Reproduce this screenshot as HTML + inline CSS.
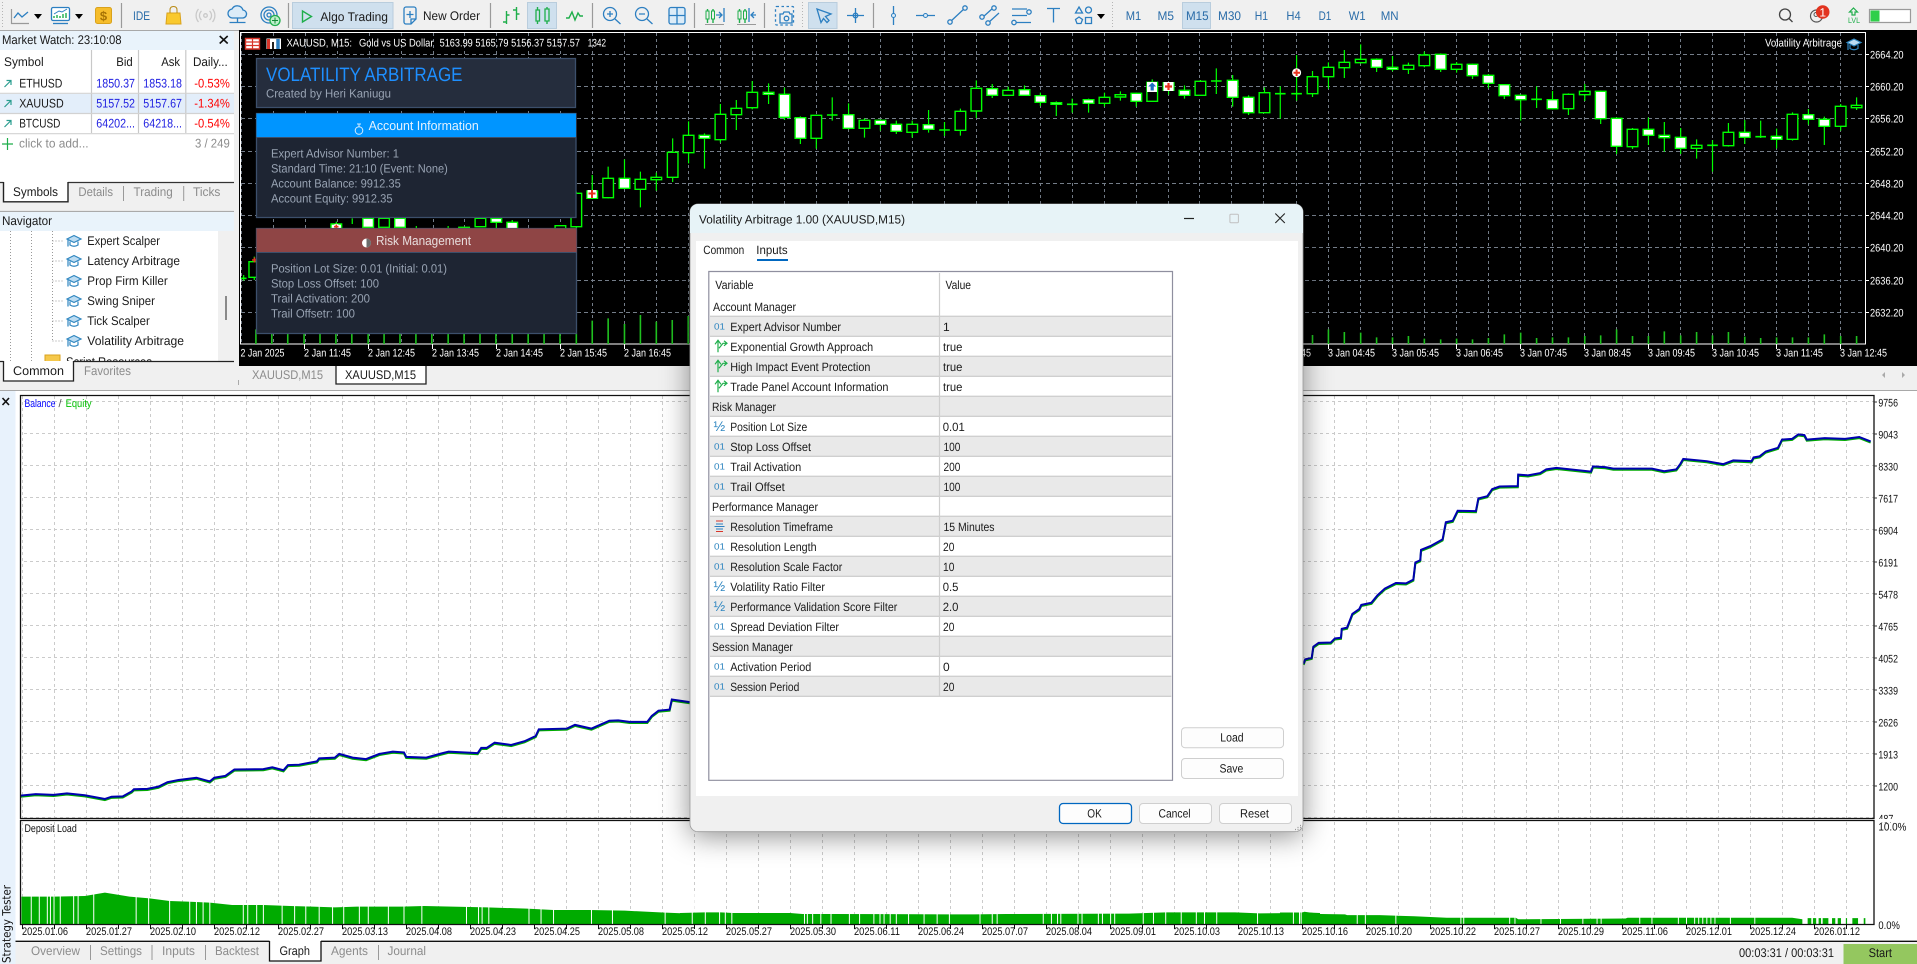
<!DOCTYPE html>
<html><head><meta charset="utf-8"><title>MetaTrader 5</title>
<style>
html,body{margin:0;padding:0;background:#f0f0f0;overflow:hidden}
svg{display:block;font-family:"Liberation Sans",sans-serif;font-size:12px;text-rendering:geometricPrecision}
path,rect,polyline,polygon,line,circle{vector-effect:non-scaling-stroke}
.ic{fill:none;stroke:#2c7fc1;stroke-width:1.3}
.gr{fill:none;stroke:#1fae4b;stroke-width:1.4}
.tb{fill:#2a6ca8;font-size:12.5px}
.mw{fill:#1a1a1a;font-size:12.5px}
.gy{fill:#8c8c8c;font-size:12.5px}
.bl{fill:#1c1ce0;font-size:12.5px}
.rd{fill:#f00;font-size:12.5px}
.wh{fill:#fff;font-size:11px}
.pn{fill:#98a3b3;font-size:12px}
.dg{fill:#1a1a1a;font-size:12px}
.o1{fill:#2f86c0;font-size:9px}
.hf{fill:#2f86c0;font-size:14px}
.ax{fill:#111;font-size:11px}
.wk{fill:none;stroke:#0f0;stroke-width:1.2}
.bw{fill:#fff;stroke:#0f0;stroke-width:1.4}
.bb{fill:#000;stroke:#0f0;stroke-width:1.4}
.dj{fill:none;stroke:#0f0;stroke-width:1.6}
.vo{fill:none;stroke:#1fc01f;stroke-width:1.6}
</style></head><body>
<svg xmlns="http://www.w3.org/2000/svg" width="1917" height="964" viewBox="0 0 1917 964">
<defs>
<pattern id="gv" patternUnits="userSpaceOnUse" x="22" y="0" width="32" height="6"><rect x="0" y="0" width="1" height="3" fill="#cbcbcb"/></pattern>
<pattern id="gh" patternUnits="userSpaceOnUse" x="0" y="401" width="6" height="32"><rect x="0" y="0" width="3" height="1" fill="#cbcbcb"/></pattern>
<pattern id="gt" patternUnits="userSpaceOnUse" x="22" y="925" width="32" height="4"><rect x="0" y="0" width="1" height="4" fill="#111"/></pattern>
<filter id="sh" filterUnits="userSpaceOnUse" x="600" y="150" width="800" height="780"><feGaussianBlur stdDeviation="14"/></filter>
<g id="cp"><path d="M1 4.500L8 1l7 3.500L8 8z" fill="#bcdcf2" stroke="#2f86c0" stroke-width="1.200"/><path d="M4 7v3.500q4 2.500 8 0V7M2 5v7" fill="none" stroke="#2f86c0" stroke-width="1.200"/></g>
<g id="ar"><path d="M4.500 3.500L11-3M6.500-3H11V1.500" fill="none" stroke="#2a9d8f" stroke-width="1.200"/></g>
<g id="bo"><path d="M4 16V5M1 8L4 4l3 4M5 12l4-5h3M10 4.500l3 2.500-3 2.500" fill="none" stroke="#1fae4b" stroke-width="1.200"/></g>
</defs>

<rect width="1917" height="964" fill="#f0f0f0"/>

<!-- toolbar -->
<path d="M2.500 2V29M802.500 2V29M1112.500 2V29" stroke="#b5b5b5" stroke-dasharray="1 2"/>
<path d="M121.500 3V28M288.500 3V28M490.500 3V28M592.500 3V28M694.500 3V28M764.500 3V28M873.500 3V28" stroke="#9a9a9a" stroke-width="1.200"/>
<path d="M11.500 9V23.500H29" fill="none" stroke="#999" stroke-width="1.200"/>
<path d="M14 18L18 13l4 4 6-5" class="ic"/>
<path d="M34 14h8l-4 5z"/>
<rect x="51.500" y="7.500" width="18" height="13" rx="1.500" fill="#fff" stroke="#2c7fc1" stroke-width="1.300"/>
<path d="M54 18v-2M57 18v-3M60 18v-2M63 18v-4M66 18v-5" class="gr"/>
<path d="M54 14l5-3 3 1 5-3" fill="none" stroke="#2c7fc1"/>
<path d="M53 23.500h15" class="ic" stroke-width="2"/>
<path d="M75 14h8l-4 5z"/>
<rect x="95.500" y="7.500" width="16" height="16" rx="2" fill="#f6bd2b" stroke="#d9a21c"/>
<text x="103.500" y="20.500" text-anchor="middle" font-size="13" font-weight="bold" fill="#a87405">$</text>
<text class="tb" x="133" y="20" font-size="13" textLength="17" lengthAdjust="spacingAndGlyphs">IDE</text>
<path d="M167 13h13l1 11h-15z" fill="#f9c92e" stroke="#d9a21c"/>
<path d="M170 13V10q0-3.500 3.500-3.500T177 10v3" fill="none" stroke="#b98a14"/>
<circle cx="205.500" cy="15.500" r="1.800" fill="none" stroke="#c9c9c9" stroke-width="1.300"/>
<path d="M201.500 11a6 6 0 0 0 0 9M209.500 11a6 6 0 0 1 0 9M198.500 9a10 10 0 0 0 0 13M212.500 9a10 10 0 0 1 0 13" fill="none" stroke="#c9c9c9" stroke-width="1.300"/>
<path d="M233 18h9a4 4 0 0 0 1-8a6 6 0 0 0-11-1a4.500 4.500 0 0 0 1 9z" fill="#dcecf8" stroke="#2c7fc1" stroke-width="1.300"/>
<path d="M237.500 18v4M229.500 22.500h16" class="ic"/>
<circle cx="269" cy="15" r="8" class="ic"/><circle cx="269" cy="15" r="5" class="ic"/><circle cx="269" cy="15" r="2" class="ic"/>
<circle cx="275" cy="20.500" r="5" fill="#bff0cc" stroke="#1fae4b" stroke-width="1.300"/>
<path d="M275 17.500v6M272 20.500h6" stroke="#138a36" fill="none"/>
<rect x="292.500" y="2.500" width="100.500" height="26" fill="#cfe0ee" stroke="#b9cddd"/>
<path d="M302.500 11v11l9-5.500z" class="gr" stroke-width="1.600"/>
<text class="mw" x="320.400" y="21" font-size="13" textLength="67.600" lengthAdjust="spacingAndGlyphs">Algo Trading</text>
<path d="M404 9a2 2 0 0 1 2-2h8a2 2 0 0 1 2 2v10l-5 5h-5a2 2 0 0 1-2-2z" class="ic"/>
<path d="M410 11v7M406.500 14.500h7M411 24v-5h5" class="ic"/>
<text class="mw" x="423" y="20" font-size="13" textLength="57" lengthAdjust="spacingAndGlyphs">New Order</text>
<path d="M506.500 11v13M503 22h3.500M506.500 15h3M516.500 7v13M513 10h3.500M516.500 14h3" class="gr"/>
<rect x="527.500" y="2.500" width="29" height="26" fill="#cfe0ee" stroke="#b9cddd"/>
<path d="M537.500 7v17M547 7v17" class="gr"/><rect x="536" y="10" width="3.500" height="11" fill="#cfe0ee" stroke="#1fae4b" stroke-width="1.300"/><rect x="545" y="9" width="4" height="12" fill="#cfe0ee" stroke="#1fae4b" stroke-width="1.300"/>
<path d="M566 18h3l3-6 3 8 3-7 2 3h3" class="gr"/>
<circle cx="610" cy="14" r="6.500" class="ic"/><path d="M615 19l5.500 5M610 11v6M607 14h6" class="ic"/>
<circle cx="642" cy="14" r="6.500" class="ic"/><path d="M647 19l5.500 5M639 14h6" class="ic"/>
<rect x="669" y="7.500" width="16" height="16.500" rx="2" fill="#dcecf8" stroke="#2c7fc1" stroke-width="1.300"/><path d="M677 8v16M669 15.500h16" class="ic"/>
<path d="M707.500 9v14M713 9v14" class="gr"/><rect x="706" y="11" width="3" height="8" fill="#f0f0f0" stroke="#1fae4b"/><rect x="711.500" y="11" width="3" height="8" fill="#f0f0f0" stroke="#1fae4b"/>
<path d="M716 15h6m-3-3l3 3l-3 3M724 8v14" class="ic"/><path d="M705 24.500h19" stroke="#999" fill="none"/>
<path d="M739.500 9v14M745 9v14" class="gr"/><rect x="738" y="11" width="3" height="8" fill="#f0f0f0" stroke="#1fae4b"/><rect x="743.500" y="11" width="3" height="8" fill="#f0f0f0" stroke="#1fae4b"/>
<path d="M749 8v14M756 15h-5m3-3l-3 3l3 3" class="ic"/><path d="M737 24.500h19" stroke="#999" fill="none"/>
<rect x="775.500" y="6.500" width="18" height="18.500" rx="1" class="ic" stroke-dasharray="2.500 2.500"/>
<path d="M780 14h3l1-2h5l1 2h2v9h-12z" fill="#f0f0f0" stroke="#2c7fc1" stroke-width="1.300"/><circle cx="786.500" cy="18.500" r="2.300" class="ic"/>
<rect x="808.500" y="2.500" width="28.500" height="26" fill="#cfe0ee" stroke="#b9cddd"/>
<path d="M817 9l14 5-5.500 2.500 3.500 4-2 2-3.500-4-2.500 4z" class="ic" stroke-width="1.400"/>
<path d="M855.500 8v15M847 15.500h17" class="ic"/><circle cx="855.500" cy="15.500" r="2.300" class="ic"/>
<path d="M893.500 6v19M916 15.500h19M950 22L965 8M983 17L993 8M988 23L999 13M1012 9h15M1012 15.500h15M1016 22.500h15" class="ic"/>
<circle cx="893.500" cy="15.500" r="2" fill="#dcecf8" stroke="#2c7fc1"/><circle cx="925.500" cy="15.500" r="2" fill="#dcecf8" stroke="#2c7fc1"/>
<circle cx="950" cy="22" r="2.200" fill="#f0f0f0" stroke="#2c7fc1" stroke-width="1.300"/><circle cx="965" cy="8" r="2.200" fill="#f0f0f0" stroke="#2c7fc1" stroke-width="1.300"/>
<circle cx="982" cy="17" r="2.200" fill="#f0f0f0" stroke="#2c7fc1" stroke-width="1.300"/><circle cx="994" cy="8" r="2.200" fill="#f0f0f0" stroke="#2c7fc1" stroke-width="1.300"/><circle cx="988" cy="23" r="2.200" fill="#f0f0f0" stroke="#2c7fc1" stroke-width="1.300"/>
<circle cx="1029" cy="12" r="2.200" fill="#f0f0f0" stroke="#2c7fc1" stroke-width="1.300"/><circle cx="1014" cy="22.500" r="2.200" fill="#f0f0f0" stroke="#2c7fc1" stroke-width="1.300"/>
<path d="M1047 8.500h13M1053.500 8.500v14" class="ic"/>
<path d="M1079 7l3.500 6h-7z" class="ic"/><circle cx="1088.500" cy="10" r="3" class="ic"/><path d="M1079 17l3.500 2.500-1.500 4h-4l-1.500-4z" class="ic"/><rect x="1085.500" y="17.500" width="6" height="6" class="ic"/>
<path d="M1097 14h8l-4 5z"/>
<text class="tb" x="1125.700" y="20" textLength="15.500" lengthAdjust="spacingAndGlyphs">M1</text>
<text class="tb" x="1157.500" y="20" textLength="16.500" lengthAdjust="spacingAndGlyphs">M5</text>
<rect x="1182.500" y="2.500" width="28" height="26" fill="#cfe0ee" stroke="#b9cddd"/>
<text class="tb" x="1186" y="20" textLength="22.600" lengthAdjust="spacingAndGlyphs">M15</text>
<text class="tb" x="1218" y="20" textLength="23" lengthAdjust="spacingAndGlyphs">M30</text>
<text class="tb" x="1254.700" y="20" textLength="13.300" lengthAdjust="spacingAndGlyphs">H1</text>
<text class="tb" x="1286.400" y="20" textLength="14.300" lengthAdjust="spacingAndGlyphs">H4</text>
<text class="tb" x="1318.600" y="20" textLength="12.700" lengthAdjust="spacingAndGlyphs">D1</text>
<text class="tb" x="1348.800" y="20" textLength="16.800" lengthAdjust="spacingAndGlyphs">W1</text>
<text class="tb" x="1380.700" y="20" textLength="17.900" lengthAdjust="spacingAndGlyphs">MN</text>
<circle cx="1785" cy="14.500" r="5.500" fill="none" stroke="#444" stroke-width="1.300"/><path d="M1789 18.500l3.500 3.500" stroke="#444" stroke-width="1.300"/>
<circle cx="1816.500" cy="16" r="6" fill="none" stroke="#555" stroke-width="1.200"/><circle cx="1816" cy="14.500" r="2" fill="none" stroke="#555"/>
<circle cx="1822.700" cy="12" r="6.800" fill="#e2331f"/>
<text x="1822.700" y="16.500" text-anchor="middle" fill="#fff" font-size="12">1</text>
<path d="M1853.500 8l4 4h-2.500v3h-3v-3h-2.500z" fill="none" stroke="#1fae4b" stroke-width="1.200"/>
<text x="1848" y="23" fill="#1fae4b" font-size="8" textLength="12" lengthAdjust="spacingAndGlyphs">LVL</text>
<rect x="1869.500" y="9.500" width="41" height="13" fill="#fff" stroke="#9a9a9a" stroke-width="1.200"/>
<rect x="1870.500" y="10.500" width="9" height="11" fill="#2fcf4a"/>

<!-- chart -->
<rect x="239" y="30" width="1678" height="336" fill="#000"/>
<rect x="0" y="30" width="239" height="1" fill="#a8a8a8"/>
<rect x="240.500" y="32.500" width="1625" height="311.500" fill="none" stroke="#fff"/>
<g transform="translate(.5,0)" stroke="#747d89" fill="none" stroke-dasharray="3 3">
<path d="M241 33V344M273 33V344M305 33V344M337 33V344M369 33V344M401 33V344M433 33V344M464 33V344M496 33V344M528 33V344M560 33V344M592 33V344M624 33V344M656 33V344M688 33V344M720 33V204M752 33V204M784 33V204M816 33V204M848 33V204M880 33V204M912 33V204M944 33V204M976 33V204M1008 33V204M1040 33V204M1072 33V204M1104 33V204M1136 33V204M1168 33V204M1199 33V204M1231 33V204M1263 33V204M1296 33V344M1328 33V344M1360 33V344M1392 33V344M1424 33V344M1456 33V344M1488 33V344M1520 33V344M1552 33V344M1584 33V344M1616 33V344M1648 33V344M1680 33V344M1712 33V344M1744 33V344M1776 33V344M1808 33V344M1840 33V344"/>
</g>
<path d="M241 54.500H1865M241 86.500H1865M241 118.500H1865M241 151.500H1865M241 183.500H1865M241 215.500H1865M241 247.500H1865M241 280.500H1865M241 312.500H1865" stroke="#747d89" fill="none" stroke-dasharray="4 3"/>
<path d="M1866 54.500h3M1866 86.500h3M1866 118.500h3M1866 151.500h3M1866 183.500h3M1866 215.500h3M1866 247.500h3M1866 280.500h3M1866 312.500h3" stroke="#fff"/>

<!-- candles z1 -->
<g transform="scale(.40816,.33333)">
<path class="vo" d="M627 988V1032M666 1000V1032M705 1000V1032M745 1000V1032M784 1000V1032M823 1000V1032M862 1000V1032M902 1000V1032M941 1000V1032M980 1000V1032M1019 1000V1032M1058 1000V1032M1098 1000V1032M1137 1000V1032M1176 1000V1032M1215 1000V1032M1255 1000V1032M1294 1000V1032M1333 1000V1032M1372 1000V1032M1412 1000V1032M1451 962V1032M1490 955V1032M1530 972V1032M1569 945V1032"/>
<path class="wk" d="M1412 575V690M1451 525V597M1490 500V595M1530 478V567M863 655V672M824 665V692M1020 678V690M1098 678V690M1216 655V685M1255 660V690M597 825V842M623 770V840"/>
<path class="bb" d="M1399 580h26V680h-26zM1477 535h26V593h-26zM928 655h26V682h-26zM1124 682h26V690h-26zM1164 655h26V680h-26zM1360 677h26V690h-26zM610 785h26V832h-26z"/>
<path class="bw" d="M1438 573h26V595h-26zM1517 535h26V565h-26zM811 672h26V690h-26zM889 655h26V682h-26zM967 655h26V682h-26zM1203 655h26V667h-26zM1242 667h26V690h-26z"/>
<path class="dj" d="M590 835h14"/>
</g>
<!-- candles z2 -->
<g transform="translate(640,0) scale(.40816,.33333)">
<path class="vo" d="M40 965V1032M79 960V1032M118 948V1032"/>
<path class="wk" d="M1 515V622M40 518V572M80 415V546M119 364V490M158 400V506M197 312V428M236 300V390M275 243V328M315 250V312M354 263V360M393 349V432M432 344V446M471 292V362M511 310V388M550 355V413M589 358V392M628 362V402M667 362V413M707 330V398M746 366V408M785 326V407M824 241V354M863 252V294M902 260V287M942 256V288M981 278V318M1020 304V348M1059 296V338M1099 296V338M1138 278V320M1177 274V302M1216 278V320M1255 238V305M1295 246V284M1334 256V296M1373 240V288M1412 205V282M1452 225V320M1491 286V345M1530 262V338"/>
<path class="bw" d="M145 406h26V415h-26zM302 277h26V283h-26zM341 283h26V352h-26zM380 353h26V415h-26zM498 344h26V385h-26zM576 361h26V373h-26zM615 373h26V394h-26zM694 374h26V388h-26zM850 266h26V286h-26zM929 269h26V286h-26zM968 287h26V307h-26zM1007 308h26V313h-26zM1086 299h26V310h-26zM1203 280h26V304h-26zM1282 248h26V271h-26zM1321 271h26V286h-26zM1439 241h26V292h-26zM1478 292h26V338h-26z"/>
<path class="bb" d="M-12 538h26V568h-26zM27 532h26V539h-26zM67 457h26V532h-26zM106 406h26V458h-26zM184 343h26V419h-26zM223 325h26V344h-26zM262 277h26V323h-26zM419 346h26V415h-26zM537 361h26V385h-26zM654 373h26V397h-26zM772 334h26V391h-26zM811 265h26V333h-26zM889 271h26V286h-26zM1125 292h26V310h-26zM1164 284h26V291h-26zM1242 247h26V304h-26zM1360 244h26V286h-26zM1517 278h26V338h-26z"/>
<path class="dj" d="M458 345h26M733 390h26M1046 313h26M1399 243h26"/>
</g>
<!-- candles z3 -->
<g transform="translate(1277,0) scale(.40816,.33333)">
<path class="vo" d="M87 1005V1032M126 988V1032M165 996V1032M205 998V1032M244 1012V1032M283 1012V1032M322 1008V1032M361 1016V1032M401 1018V1032M440 1016V1032M479 1018V1032M518 1014V1032M557 1003V1032M597 998V1032M636 1014V1032M675 1012V1032M714 1012V1032M754 1008V1032M793 1006V1032M832 988V1032M871 1008V1032M910 1008V1032M949 994V1032M989 1006V1032M1028 996V1032M1067 1006V1032M1106 996V1032M1146 1010V1032M1185 1014V1032M1224 1012V1032M1263 1012V1032M1302 1012V1032M1341 1003V1032M1381 1008V1032M1420 1008V1032"/>
<path class="wk" d="M8 259V356M48 165V302M87 213V291M126 187V266M165 150V234M205 133V190M244 175V216M283 168V214M322 188V222M361 155V202M401 160V216M440 186V218M479 191V237M518 222V265M557 252V297M597 284V362M636 259V324M675 273V328M714 280V345M754 252V303M793 272V372M832 352V462M871 384V447M910 353V435M949 366V455M989 384V462M1028 418V476M1067 420V515M1106 369V440M1146 360V432M1185 362V414M1224 386V445M1263 337V422M1302 327V374M1341 350V435M1381 312V392M1420 292V330"/>
<path class="bw" d="M231 178h26V202h-26zM270 202h26V208h-26zM388 163h26V208h-26zM466 193h26V227h-26zM505 226h26V250h-26zM544 254h26V287h-26zM584 286h26V299h-26zM662 299h26V326h-26zM780 274h26V356h-26zM819 355h26V439h-26zM897 388h26V406h-26zM936 406h26V413h-26zM976 412h26V445h-26zM1133 397h26V412h-26zM1211 409h26V418h-26zM1289 344h26V358h-26zM1328 358h26V379h-26z"/>
<path class="bb" d="M74 230h26V281h-26zM113 202h26V230h-26zM152 187h26V203h-26zM192 178h26V188h-26zM309 196h26V208h-26zM348 165h26V197h-26zM427 193h26V208h-26zM701 283h26V326h-26zM741 274h26V284h-26zM858 388h26V440h-26zM1015 436h26V445h-26zM1093 397h26V437h-26zM1250 343h26V418h-26zM1368 319h26V379h-26zM1407 316h26V323h-26z"/>
<path class="dj" d="M-5 281h26M35 281h26M623 298h26M1054 436h26M1172 410h26"/>
</g>
<!-- markers -->
<rect x="1147" y="82" width="10" height="10" fill="#fff"/><path d="M1152.200 82.500l4 4h-2.400v4h-3.200v-4h-2.400z" fill="#1f6fc0"/>
<rect x="1163.500" y="82" width="10" height="9" fill="#fff"/><path d="M1168.500 83v7M1165 86.500h7" stroke="#e8321e" stroke-width="2.200"/>
<circle cx="1296.600" cy="72.700" r="4.500" fill="#fff"/><path d="M1296.600 69.500v6.500M1293.500 72.700h6.500" stroke="#e8321e" stroke-width="2"/>
<rect x="587.500" y="190" width="9" height="8" fill="#fff"/><path d="M592 190v8M588.500 193.500h7" stroke="#e8321e" stroke-width="2"/>
<circle cx="336.300" cy="226.700" r="3" fill="#fff"/><path d="M336.300 224.500v4.500M334 226.700h4.500" stroke="#e8321e" stroke-width="1.600"/>
<path d="M254.500 257.500v5M252 260h5" stroke="#e8321e" stroke-width="1.600"/>

<!-- chart text -->
<rect x="245.500" y="38.500" width="14" height="10.500" fill="#fff" stroke="#d8352a" stroke-width="1.400"/>
<path d="M252.500 39v10M246 42h13M246 45.500h13" stroke="#d8352a" stroke-width="1.200"/>
<rect x="266.500" y="38.500" width="14.500" height="10.500" fill="#fff"/>
<path d="M268.500 39v10" stroke="#d8352a" stroke-width="3"/><path d="M273 42v7" stroke="#222" stroke-width="2"/><path d="M278 39v10" stroke="#2c7fc1" stroke-width="3.500"/>
<text class="wh" x="286.500" y="46.700" textLength="65.500" lengthAdjust="spacingAndGlyphs">XAUUSD, M15:</text>
<text class="wh" x="359" y="46.700" textLength="74.500" lengthAdjust="spacingAndGlyphs">Gold vs US Dollar</text>
<text class="wh" x="439.600" y="46.700" textLength="140.400" lengthAdjust="spacingAndGlyphs">5163.99 5165.79 5156.37 5157.57</text>
<text class="wh" x="587.800" y="46.700" textLength="18.200" lengthAdjust="spacingAndGlyphs">1342</text>
<text class="wh" x="1765" y="46.700" textLength="77" lengthAdjust="spacingAndGlyphs">Volatility Arbitrage</text>
<use href="#cp" x="1846" y="38"/>
<text class="wh" x="1870" y="58.500" textLength="33.500" lengthAdjust="spacingAndGlyphs">2664.20</text>
<text class="wh" x="1870" y="90.500" textLength="33.500" lengthAdjust="spacingAndGlyphs">2660.20</text>
<text class="wh" x="1870" y="122.500" textLength="33.500" lengthAdjust="spacingAndGlyphs">2656.20</text>
<text class="wh" x="1870" y="155.500" textLength="33.500" lengthAdjust="spacingAndGlyphs">2652.20</text>
<text class="wh" x="1870" y="187.500" textLength="33.500" lengthAdjust="spacingAndGlyphs">2648.20</text>
<text class="wh" x="1870" y="219.500" textLength="33.500" lengthAdjust="spacingAndGlyphs">2644.20</text>
<text class="wh" x="1870" y="251.500" textLength="33.500" lengthAdjust="spacingAndGlyphs">2640.20</text>
<text class="wh" x="1870" y="284.500" textLength="33.500" lengthAdjust="spacingAndGlyphs">2636.20</text>
<text class="wh" x="1870" y="316.500" textLength="33.500" lengthAdjust="spacingAndGlyphs">2632.20</text>
<text class="wh" x="240.500" y="356.700" textLength="44" lengthAdjust="spacingAndGlyphs">2 Jan 2025</text>
<text class="wh" x="304" y="356.700" textLength="47" lengthAdjust="spacingAndGlyphs">2 Jan 11:45</text>
<text class="wh" x="368" y="356.700" textLength="47" lengthAdjust="spacingAndGlyphs">2 Jan 12:45</text>
<text class="wh" x="432" y="356.700" textLength="47" lengthAdjust="spacingAndGlyphs">2 Jan 13:45</text>
<text class="wh" x="496" y="356.700" textLength="47" lengthAdjust="spacingAndGlyphs">2 Jan 14:45</text>
<text class="wh" x="560" y="356.700" textLength="47" lengthAdjust="spacingAndGlyphs">2 Jan 15:45</text>
<text class="wh" x="624" y="356.700" textLength="47" lengthAdjust="spacingAndGlyphs">2 Jan 16:45</text>
<text class="wh" x="1264" y="356.700" textLength="47" lengthAdjust="spacingAndGlyphs">3 Jan 03:45</text>
<text class="wh" x="1328" y="356.700" textLength="47" lengthAdjust="spacingAndGlyphs">3 Jan 04:45</text>
<text class="wh" x="1392" y="356.700" textLength="47" lengthAdjust="spacingAndGlyphs">3 Jan 05:45</text>
<text class="wh" x="1456" y="356.700" textLength="47" lengthAdjust="spacingAndGlyphs">3 Jan 06:45</text>
<text class="wh" x="1520" y="356.700" textLength="47" lengthAdjust="spacingAndGlyphs">3 Jan 07:45</text>
<text class="wh" x="1584" y="356.700" textLength="47" lengthAdjust="spacingAndGlyphs">3 Jan 08:45</text>
<text class="wh" x="1648" y="356.700" textLength="47" lengthAdjust="spacingAndGlyphs">3 Jan 09:45</text>
<text class="wh" x="1712" y="356.700" textLength="47" lengthAdjust="spacingAndGlyphs">3 Jan 10:45</text>
<text class="wh" x="1776" y="356.700" textLength="47" lengthAdjust="spacingAndGlyphs">3 Jan 11:45</text>
<text class="wh" x="1840" y="356.700" textLength="47" lengthAdjust="spacingAndGlyphs">3 Jan 12:45</text>
<path d="M304.500 344v5M368.500 344v5M432.500 344v5M496.500 344v5M560.500 344v5M624.500 344v5M1328.500 344v5M1392.500 344v5M1456.500 344v5M1520.500 344v5M1584.500 344v5M1648.500 344v5M1712.500 344v5M1776.500 344v5M1840.500 344v5" stroke="#fff"/>

<!-- EA panels -->
<rect x="256.500" y="58.500" width="319" height="49" fill="#252d3d" stroke="#3c4f6b" stroke-width="1.300"/>
<text x="266" y="81" font-size="19.500" fill="#1e8fff" textLength="196.500" lengthAdjust="spacingAndGlyphs">VOLATILITY ARBITRAGE</text>
<text class="pn" x="266" y="97.700" font-size="13" textLength="125" lengthAdjust="spacingAndGlyphs">Created by Heri Kaniugu</text>
<rect x="256.500" y="113.500" width="319.500" height="104" fill="#1e2533" stroke="#3c4f6b" stroke-width="1.300"/>
<rect x="256.500" y="113.500" width="319.500" height="24" fill="#0095ff"/>
<path d="M256.500 137.500H576" stroke="#3c4f6b"/>
<circle cx="359" cy="130.500" r="3.800" fill="none" stroke="#d5ecff"/><path d="M359 124v2.700M357 124h4" stroke="#d5ecff"/>
<text x="368.600" y="130" font-size="13" fill="#e4f2ff" textLength="110.200" lengthAdjust="spacingAndGlyphs">Account Information</text>
<text class="pn" x="271" y="157.700" textLength="128" lengthAdjust="spacingAndGlyphs">Expert Advisor Number: 1</text>
<text class="pn" x="271" y="172.700" textLength="176.800" lengthAdjust="spacingAndGlyphs">Standard Time: 21:10 (Event: None)</text>
<text class="pn" x="271" y="187.700" textLength="129.800" lengthAdjust="spacingAndGlyphs">Account Balance: 9912.35</text>
<text class="pn" x="271" y="202.700" textLength="121.600" lengthAdjust="spacingAndGlyphs">Account Equity: 9912.35</text>
<rect x="256.500" y="228.500" width="320" height="105" fill="#1e2533" stroke="#3c4f6b" stroke-width="1.300"/>
<rect x="256.500" y="228.500" width="320" height="24" fill="#8f4545"/>
<path d="M256.500 252.500H576" stroke="#3c4f6b"/>
<circle cx="366.500" cy="243" r="4.500" fill="#fff"/><path d="M366.500 238.500a4.500 4.500 0 0 1 0 9z" fill="#6b6b6b"/>
<text x="376" y="245" font-size="13" fill="#e8dede" textLength="95" lengthAdjust="spacingAndGlyphs">Risk Management</text>
<text class="pn" x="271" y="272.700" textLength="176" lengthAdjust="spacingAndGlyphs">Position Lot Size: 0.01 (Initial: 0.01)</text>
<text class="pn" x="271" y="287.700" textLength="108" lengthAdjust="spacingAndGlyphs">Stop Loss Offset: 100</text>
<text class="pn" x="271" y="302.700" textLength="99" lengthAdjust="spacingAndGlyphs">Trail Activation: 200</text>
<text class="pn" x="271" y="317.700" textLength="84" lengthAdjust="spacingAndGlyphs">Trail Offsetr: 100</text>

<!-- market watch -->
<rect x="0" y="31" width="234" height="19" fill="#e9f3fb"/>
<rect x="0" y="50" width="234" height="132" fill="#fff"/>
<rect x="0" y="94" width="234" height="19.500" fill="#e3eefa"/>
<text class="mw" x="2" y="44" textLength="119.600" lengthAdjust="spacingAndGlyphs">Market Watch: 23:10:08</text>
<path d="M219.700 36l8 7.500M227.700 36l-8 7.500M219.700 216.700l8 7.500M227.700 216.700l-8 7.500" stroke="#111" stroke-width="1.600"/>
<text class="mw" x="4" y="66" textLength="39.700" lengthAdjust="spacingAndGlyphs">Symbol</text>
<text class="mw" x="116.300" y="66" textLength="16.400" lengthAdjust="spacingAndGlyphs">Bid</text>
<text class="mw" x="161.200" y="66" textLength="18.800" lengthAdjust="spacingAndGlyphs">Ask</text>
<text class="mw" x="193" y="66" textLength="34.800" lengthAdjust="spacingAndGlyphs">Daily...</text>
<path d="M91.500 50V133M138.500 50V133M185.800 50V133" stroke="#c8c8c8" stroke-width="1.200"/>
<path d="M0 93.300H234M0 113.500H234M0 133.700H234" stroke="#d2d2d2" stroke-width="1.200"/>
<use href="#ar" x="0" y="83.500"/><use href="#ar" x="0" y="103.500"/><use href="#ar" x="0" y="123.500"/>
<text class="mw" x="19.200" y="87.700" textLength="43.200" lengthAdjust="spacingAndGlyphs">ETHUSD</text>
<text class="mw" x="19.200" y="107.700" textLength="44.500" lengthAdjust="spacingAndGlyphs">XAUUSD</text>
<text class="mw" x="19.200" y="127.700" textLength="41.200" lengthAdjust="spacingAndGlyphs">BTCUSD</text>
<text class="bl" x="96.300" y="87.700" textLength="38.700" lengthAdjust="spacingAndGlyphs">1850.37</text>
<text class="bl" x="143.300" y="87.700" textLength="38.700" lengthAdjust="spacingAndGlyphs">1853.18</text>
<text class="rd" x="194.300" y="87.700" textLength="35.500" lengthAdjust="spacingAndGlyphs">-0.53%</text>
<text class="bl" x="96.300" y="107.700" textLength="38.700" lengthAdjust="spacingAndGlyphs">5157.52</text>
<text class="bl" x="143.300" y="107.700" textLength="38.700" lengthAdjust="spacingAndGlyphs">5157.67</text>
<text class="rd" x="194.300" y="107.700" textLength="35.500" lengthAdjust="spacingAndGlyphs">-1.34%</text>
<text class="bl" x="96.300" y="127.700" textLength="38.700" lengthAdjust="spacingAndGlyphs">64202...</text>
<text class="bl" x="143.300" y="127.700" textLength="38.700" lengthAdjust="spacingAndGlyphs">64218...</text>
<text class="rd" x="194.300" y="127.700" textLength="35.500" lengthAdjust="spacingAndGlyphs">-0.54%</text>
<path d="M7.500 138v12M2 144h11" stroke="#1fae4b" stroke-width="1.200"/>
<text class="gy" x="19" y="147.700" textLength="69.600" lengthAdjust="spacingAndGlyphs">click to add...</text>
<text class="gy" x="195" y="147.700" textLength="34.800" lengthAdjust="spacingAndGlyphs">3 / 249</text>
<rect x="3.500" y="182" width="64.500" height="20" fill="#fff"/>
<path d="M0 182.500H3.500M68 182.500H234" stroke="#333" stroke-width="1.200"/>
<path d="M3.500 182v19.800H68V182" fill="none" stroke="#222" stroke-width="1.400"/>
<text class="mw" x="13" y="196" textLength="45" lengthAdjust="spacingAndGlyphs">Symbols</text>
<text class="gy" x="78.400" y="196" textLength="34.600" lengthAdjust="spacingAndGlyphs">Details</text>
<text class="gy" x="133.500" y="196" textLength="39.200" lengthAdjust="spacingAndGlyphs">Trading</text>
<text class="gy" x="193" y="196" textLength="27.400" lengthAdjust="spacingAndGlyphs">Ticks</text>
<path d="M123.500 186v15M183.700 186v15" stroke="#999"/>
<path d="M0 211.500H234" stroke="#aaa" stroke-width="1.200"/>

<!-- navigator -->
<rect x="0" y="212" width="234" height="19" fill="#e9f3fb"/>
<text class="mw" x="2" y="225" textLength="50" lengthAdjust="spacingAndGlyphs">Navigator</text>
<rect x="0" y="231" width="218" height="130" fill="#fff"/>
<path d="M10.500 231V361M31.500 231V361M52.500 231V341M52.500 241H63M52.500 261H63M52.500 281H63M52.500 301H63M52.500 321H63M52.500 341H63" stroke="#999" fill="none" stroke-dasharray="1 2"/>
<use href="#cp" x="66" y="234.500"/><use href="#cp" x="66" y="254.500"/><use href="#cp" x="66" y="274.500"/><use href="#cp" x="66" y="294.500"/><use href="#cp" x="66" y="314.500"/><use href="#cp" x="66" y="334.500"/>
<text class="mw" x="87.300" y="245" textLength="72.700" lengthAdjust="spacingAndGlyphs">Expert Scalper</text>
<text class="mw" x="87.300" y="265" textLength="92.700" lengthAdjust="spacingAndGlyphs">Latency Arbitrage</text>
<text class="mw" x="87.300" y="285" textLength="80.500" lengthAdjust="spacingAndGlyphs">Prop Firm Killer</text>
<text class="mw" x="87.300" y="305" textLength="67.700" lengthAdjust="spacingAndGlyphs">Swing Sniper</text>
<text class="mw" x="87.300" y="325" textLength="62.500" lengthAdjust="spacingAndGlyphs">Tick Scalper</text>
<text class="mw" x="87.300" y="345" textLength="96.700" lengthAdjust="spacingAndGlyphs">Volatility Arbitrage</text>
<rect x="45" y="355" width="15" height="8" fill="#f5c84b" stroke="#d9a21c"/>
<text class="mw" x="66" y="366" textLength="86" lengthAdjust="spacingAndGlyphs">Script Resources</text>
<rect x="225" y="296" width="2" height="24" fill="#8a8a8a"/>
<rect x="0" y="361" width="239" height="30" fill="#f0f0f0"/>
<rect x="3.500" y="361" width="70" height="20" fill="#fff"/>
<path d="M0 361.500H3.500M73.500 361.500H234" stroke="#222" stroke-width="1.300"/>
<path d="M3.500 361V381H73.500V361" fill="none" stroke="#222" stroke-width="1.300"/>
<text class="mw" x="13" y="375" textLength="51" lengthAdjust="spacingAndGlyphs">Common</text>
<text class="gy" x="84" y="375" textLength="47" lengthAdjust="spacingAndGlyphs">Favorites</text>

<!-- chart tabs -->
<rect x="239" y="366" width="1678" height="24.500" fill="#f0f0f0"/>
<text class="gy" x="252" y="379" font-size="12.500" textLength="71" lengthAdjust="spacingAndGlyphs">XAUUSD,M15</text>
<rect x="336" y="366" width="90" height="18" fill="#fff"/>
<path d="M336 366V384H426V366" fill="none" stroke="#222" stroke-width="1.300"/>
<text class="mw" x="345" y="379" textLength="71" lengthAdjust="spacingAndGlyphs">XAUUSD,M15</text>
<path d="M238.500 380v5" stroke="#aaa"/>
<path d="M1885 372v6l-3-3zM1902 372v6l3-3z" fill="#aaa"/>
<rect x="0" y="390" width="1917" height="1.300" fill="#a8a8a8"/>

<!-- tester -->
<rect x="0" y="391" width="1917" height="573" fill="#fff"/>
<rect x="0" y="391" width="15.500" height="573" fill="#e8f2fc"/>
<path d="M2.500 398l6.500 7M9 398l-6.500 7" stroke="#111" stroke-width="1.600"/>
<text x="0" y="0" transform="translate(10.500,963) rotate(-90)" font-family="'DejaVu Sans',sans-serif" font-size="11.500" fill="#111" textLength="78" lengthAdjust="spacingAndGlyphs">Strategy Tester</text>
<rect x="21" y="396" width="1853" height="422" fill="url(#gv)"/>
<rect x="21" y="396" width="1853" height="422" fill="url(#gh)"/>
<rect x="21" y="821" width="1853" height="103" fill="url(#gv)"/>
<!-- equity curve -->
<g transform="translate(0,380) scale(.4464,.3724)">
<polyline transform="translate(0,3)" fill="none" stroke="#00aa00" stroke-width="2" points="46,1116 80,1112 120,1114 150,1110 190,1115 235,1125 250,1119 275,1118 295,1105 300,1099 330,1098 355,1092 375,1080 400,1074 440,1068 470,1078 480,1068 505,1063 525,1046 590,1045 610,1040 635,1048 645,1034 670,1033 710,1024 715,1016 750,1014 760,1004 790,1014 820,1018 850,1004 880,998 905,1000 910,1012 955,1014 985,1004 1005,998 1070,1002 1078,988 1090,988 1108,974 1145,980 1175,970 1200,956 1207,938 1270,936 1288,926 1325,936 1365,915 1385,914 1410,918 1450,918 1460,902 1475,888 1500,885 1505,858 1545,865"/>
<polyline fill="none" stroke="#0000b0" stroke-width="2" points="46,1116 80,1112 120,1114 150,1110 190,1115 235,1125 250,1119 275,1118 295,1105 300,1099 330,1098 355,1092 375,1080 400,1074 440,1068 470,1078 480,1068 505,1063 525,1046 590,1045 610,1040 635,1048 645,1034 670,1033 710,1024 715,1016 750,1014 760,1004 790,1014 820,1018 850,1004 880,998 905,1000 910,1012 955,1014 985,1004 1005,998 1070,1002 1078,988 1090,988 1108,974 1145,980 1175,970 1200,956 1207,938 1270,936 1288,926 1325,936 1365,915 1385,914 1410,918 1450,918 1460,902 1475,888 1500,885 1505,858 1545,865"/>
</g>
<g transform="translate(1280,380) scale(.4065,.3724)">
<polyline transform="translate(0,3)" fill="none" stroke="#00aa00" stroke-width="2" points="58,762 62,750 78,746 82,716 95,706 125,705 135,694 150,692 152,668 165,665 178,628 195,615 200,604 225,598 240,578 258,560 285,545 310,546 328,536 333,490 345,484 347,456 370,446 400,428 408,382 425,378 437,351 482,352 488,318 510,312 522,293 540,286 585,285 586,254 610,256 640,250 655,240 680,236 765,246 770,232 800,234 820,238 860,238 915,238 945,245 975,240 985,225 992,212 1050,218 1090,226 1115,216 1160,218 1165,208 1180,205 1195,192 1225,182 1235,160 1260,158 1275,146 1290,148 1296,160 1340,156 1390,158 1425,153 1453,165"/>
<polyline fill="none" stroke="#0000b0" stroke-width="2" points="58,762 62,750 78,746 82,716 95,706 125,705 135,694 150,692 152,668 165,665 178,628 195,615 200,604 225,598 240,578 258,560 285,545 310,546 328,536 333,490 345,484 347,456 370,446 400,428 408,382 425,378 437,351 482,352 488,318 510,312 522,293 540,286 585,285 586,254 610,256 640,250 655,240 680,236 765,246 770,232 800,234 820,238 860,238 915,238 945,245 975,240 985,225 992,212 1050,218 1090,226 1115,216 1160,218 1165,208 1180,205 1195,192 1225,182 1235,160 1260,158 1275,146 1290,148 1296,160 1340,156 1390,158 1425,153 1453,165"/>
</g>
<!-- deposit load bars -->
<g transform="translate(0,820) scale(.4464,.33333)">
<polygon fill="#00ab00" points="48,313 48,230 120,230 190,228 235,218 290,230 335,235 380,243 420,245 470,248 520,255 590,255 650,258 700,260 750,262 800,260 900,260 950,258 1090,262 1180,266 1240,270 1320,270 1400,272 1490,278 1568,282 1568,313"/>
<path fill="none" stroke="#fff" stroke-width="1" d="M70 215V313M88 215V313M106 215V313M113 215V313M121 215V313M135 215V313M165 215V313M175 215V313M210 215V313M305 215V313M333 215V313M380 215V313M425 215V313M440 215V313M455 215V313M470 215V313M545 215V313M555 215V313M575 215V313M590 215V313M632 215V313M660 215V313M685 215V313M715 215V313M745 215V313M770 215V313M805 215V313M825 215V313M870 215V313M905 215V313M945 215V313M1045 215V313M1072 215V313M1080 215V313M1095 215V313M1185 215V313M1212 215V313M1240 215V313M1325 215V313M1372 215V313M1490 215V313M1555 215V313"/>
</g>
<g transform="translate(680,825) scale(.40816,.33333)">
<polygon fill="#00ab00" points="0,297 0,264 60,262 100,262 130,264 270,264 300,267 370,267 660,268 720,268 800,267 1100,266 1190,262 1360,262 1420,265 1520,264 1530,262 1568,264 1568,297"/>
<path fill="none" stroke="#fff" stroke-width="1" d="M30 255V297M62 255V297M97 255V297M111 255V297M127 255V297M305 255V297M312 255V297M325 255V297M345 255V297M370 255V297M415 255V297M440 255V297M475 255V297M490 255V297M500 255V297M515 255V297M530 255V297M560 255V297M598 255V297M630 255V297M660 255V297M735 255V297M765 255V297M777 255V297M890 255V297M910 255V297M925 255V297M933 255V297M975 255V297M985 255V297M1025 255V297M1035 255V297M1055 255V297M1065 255V297M1135 255V297M1160 255V297M1190 255V297M1228 255V297M1265 255V297M1285 255V297M1315 255V297M1415 255V297M1505 255V297M1515 255V297"/>
</g>
<g transform="translate(1280,380) scale(.4065,.3724)">
<polygon fill="#00ab00" points="0,1462 0,1430 55,1430 60,1428 100,1434 160,1435 165,1437 245,1437 330,1440 410,1444 580,1444 586,1448 850,1446 855,1444 1260,1444 1285,1448 1285,1462"/>
<path fill="#00ab00" d="M1298 1445h9v17h-9zM1311 1445h8v17h-8zM1325 1445h6v17h-6zM1335 1445h14v17h-14zM1358 1445h8v17h-8zM1372 1445h8v17h-8zM1392 1445h3v17h-3zM1408 1445h14v17h-14zM1436 1445h4v17h-4z"/>
<path fill="none" stroke="#fff" stroke-width="1" d="M33 1420V1462M48 1420V1462M52 1420V1462M190 1420V1462M210 1420V1462M285 1420V1462M445 1420V1462M452 1420V1462M565 1420V1462M578 1420V1462M642 1420V1462M690 1420V1462M745 1420V1462M780 1420V1462M790 1420V1462M885 1420V1462M915 1420V1462M980 1420V1462M1000 1420V1462M1020 1420V1462M1030 1420V1462M1040 1420V1462M1050 1420V1462M1060 1420V1462M1070 1420V1462M1108 1420V1462M1168 1420V1462"/>
</g>
<!-- tester frame -->
<path d="M20.500 395.500H1874V818.500H20.500zM20.500 820.500H1874V924.500H20.500z" fill="none" stroke="#111" stroke-width="1.300"/>
<rect x="22" y="925" width="1853" height="4" fill="url(#gt)"/>
<path d="M1874 402h3M1874 434h3M1874 466h3M1874 498h3M1874 530h3M1874 562h3M1874 594h3M1874 626h3M1874 658h3M1874 690h3M1874 722h3M1874 754h3M1874 786h3" stroke="#333"/>
<text x="24.500" y="406.800" fill="#0000ff" font-size="11" textLength="31" lengthAdjust="spacingAndGlyphs">Balance</text>
<text x="58.500" y="406.800" fill="#555" font-size="11">/</text>
<text x="65.600" y="406.800" fill="#00c000" font-size="11" textLength="26" lengthAdjust="spacingAndGlyphs">Equity</text>
<text class="ax" x="24.500" y="832" textLength="52.300" lengthAdjust="spacingAndGlyphs">Deposit Load</text>
<text class="ax" x="1878.400" y="406.500" textLength="19.600" lengthAdjust="spacingAndGlyphs">9756</text>
<text class="ax" x="1878.400" y="438.500" textLength="19.600" lengthAdjust="spacingAndGlyphs">9043</text>
<text class="ax" x="1878.400" y="470.500" textLength="19.600" lengthAdjust="spacingAndGlyphs">8330</text>
<text class="ax" x="1878.400" y="502.500" textLength="19.600" lengthAdjust="spacingAndGlyphs">7617</text>
<text class="ax" x="1878.400" y="534.500" textLength="19.600" lengthAdjust="spacingAndGlyphs">6904</text>
<text class="ax" x="1878.400" y="566.500" textLength="19.600" lengthAdjust="spacingAndGlyphs">6191</text>
<text class="ax" x="1878.400" y="598.500" textLength="19.600" lengthAdjust="spacingAndGlyphs">5478</text>
<text class="ax" x="1878.400" y="630.500" textLength="19.600" lengthAdjust="spacingAndGlyphs">4765</text>
<text class="ax" x="1878.400" y="662.500" textLength="19.600" lengthAdjust="spacingAndGlyphs">4052</text>
<text class="ax" x="1878.400" y="694.500" textLength="19.600" lengthAdjust="spacingAndGlyphs">3339</text>
<text class="ax" x="1878.400" y="726.500" textLength="19.600" lengthAdjust="spacingAndGlyphs">2626</text>
<text class="ax" x="1878.400" y="758.500" textLength="19.600" lengthAdjust="spacingAndGlyphs">1913</text>
<text class="ax" x="1878.400" y="790.500" textLength="19.600" lengthAdjust="spacingAndGlyphs">1200</text>
<text class="ax" x="1878.400" y="822.500" textLength="15" lengthAdjust="spacingAndGlyphs">487</text>
<rect x="1875" y="819" width="42" height="3" fill="#fff"/>
<text class="ax" x="1878.400" y="830.500" textLength="28" lengthAdjust="spacingAndGlyphs">10.0%</text>
<text class="ax" x="1878.400" y="929" textLength="21.500" lengthAdjust="spacingAndGlyphs">0.0%</text>
<text class="ax" x="22" y="935" textLength="46" lengthAdjust="spacingAndGlyphs">2025.01.06</text>
<text class="ax" x="86" y="935" textLength="46" lengthAdjust="spacingAndGlyphs">2025.01.27</text>
<text class="ax" x="150" y="935" textLength="46" lengthAdjust="spacingAndGlyphs">2025.02.10</text>
<text class="ax" x="214" y="935" textLength="46" lengthAdjust="spacingAndGlyphs">2025.02.12</text>
<text class="ax" x="278" y="935" textLength="46" lengthAdjust="spacingAndGlyphs">2025.02.27</text>
<text class="ax" x="342" y="935" textLength="46" lengthAdjust="spacingAndGlyphs">2025.03.13</text>
<text class="ax" x="406" y="935" textLength="46" lengthAdjust="spacingAndGlyphs">2025.04.08</text>
<text class="ax" x="470" y="935" textLength="46" lengthAdjust="spacingAndGlyphs">2025.04.23</text>
<text class="ax" x="534" y="935" textLength="46" lengthAdjust="spacingAndGlyphs">2025.04.25</text>
<text class="ax" x="598" y="935" textLength="46" lengthAdjust="spacingAndGlyphs">2025.05.08</text>
<text class="ax" x="662" y="935" textLength="46" lengthAdjust="spacingAndGlyphs">2025.05.12</text>
<text class="ax" x="726" y="935" textLength="46" lengthAdjust="spacingAndGlyphs">2025.05.27</text>
<text class="ax" x="790" y="935" textLength="46" lengthAdjust="spacingAndGlyphs">2025.05.30</text>
<text class="ax" x="854" y="935" textLength="46" lengthAdjust="spacingAndGlyphs">2025.06.11</text>
<text class="ax" x="918" y="935" textLength="46" lengthAdjust="spacingAndGlyphs">2025.06.24</text>
<text class="ax" x="982" y="935" textLength="46" lengthAdjust="spacingAndGlyphs">2025.07.07</text>
<text class="ax" x="1046" y="935" textLength="46" lengthAdjust="spacingAndGlyphs">2025.08.04</text>
<text class="ax" x="1110" y="935" textLength="46" lengthAdjust="spacingAndGlyphs">2025.09.01</text>
<text class="ax" x="1174" y="935" textLength="46" lengthAdjust="spacingAndGlyphs">2025.10.03</text>
<text class="ax" x="1238" y="935" textLength="46" lengthAdjust="spacingAndGlyphs">2025.10.13</text>
<text class="ax" x="1302" y="935" textLength="46" lengthAdjust="spacingAndGlyphs">2025.10.16</text>
<text class="ax" x="1366" y="935" textLength="46" lengthAdjust="spacingAndGlyphs">2025.10.20</text>
<text class="ax" x="1430" y="935" textLength="46" lengthAdjust="spacingAndGlyphs">2025.10.22</text>
<text class="ax" x="1494" y="935" textLength="46" lengthAdjust="spacingAndGlyphs">2025.10.27</text>
<text class="ax" x="1558" y="935" textLength="46" lengthAdjust="spacingAndGlyphs">2025.10.29</text>
<text class="ax" x="1622" y="935" textLength="46" lengthAdjust="spacingAndGlyphs">2025.11.06</text>
<text class="ax" x="1686" y="935" textLength="46" lengthAdjust="spacingAndGlyphs">2025.12.01</text>
<text class="ax" x="1750" y="935" textLength="46" lengthAdjust="spacingAndGlyphs">2025.12.24</text>
<text class="ax" x="1814" y="935" textLength="46" lengthAdjust="spacingAndGlyphs">2026.01.12</text>
<!-- tester tabs -->
<rect x="15.500" y="941" width="1902" height="23" fill="#f0f0f0"/>
<rect x="269.500" y="941" width="51.500" height="20" fill="#fff"/>
<path d="M15.500 941.300H269.500M321 941.300H1917" stroke="#111" stroke-width="1.300"/>
<path d="M269.500 941V961H321V941" fill="none" stroke="#111" stroke-width="1.300"/>
<text class="gy" x="31" y="955" textLength="49" lengthAdjust="spacingAndGlyphs">Overview</text>
<text class="gy" x="100" y="955" textLength="42" lengthAdjust="spacingAndGlyphs">Settings</text>
<text class="gy" x="162" y="955" textLength="33" lengthAdjust="spacingAndGlyphs">Inputs</text>
<text class="gy" x="215" y="955" textLength="44" lengthAdjust="spacingAndGlyphs">Backtest</text>
<text class="mw" x="279.500" y="955" textLength="30.500" lengthAdjust="spacingAndGlyphs">Graph</text>
<text class="gy" x="331" y="955" textLength="37" lengthAdjust="spacingAndGlyphs">Agents</text>
<text class="gy" x="387.500" y="955" textLength="38.500" lengthAdjust="spacingAndGlyphs">Journal</text>
<path d="M90.500 945v15M152 945v15M205.500 945v15M378.500 945v15" stroke="#999"/>
<text class="mw" x="1739" y="957" textLength="95" lengthAdjust="spacingAndGlyphs">00:03:31 / 00:03:31</text>
<rect x="1843.500" y="944" width="73.500" height="20" fill="#94c75f"/>
<text class="mw" x="1868.600" y="957" textLength="23.400" lengthAdjust="spacingAndGlyphs">Start</text>

<!-- dialog -->
<rect x="690" y="214" width="613" height="622" rx="8" fill="#000" fill-opacity=".45" filter="url(#sh)"/>
<rect x="690" y="204" width="613" height="627.700" rx="8" fill="#f0f0f0" stroke="#9a9a9a" stroke-width=".8"/>
<path d="M690 233V212a8 8 0 0 1 8-8H1295a8 8 0 0 1 8 8V233z" fill="#e7f3f7"/>
<text class="dg" x="699" y="223.300" font-size="13" textLength="206" lengthAdjust="spacingAndGlyphs">Volatility Arbitrage 1.00 (XAUUSD,M15)</text>
<path d="M1184 218.500h10" stroke="#222" stroke-width="1.200"/>
<rect x="1229.900" y="214.300" width="8.500" height="8.500" rx="1" fill="none" stroke="#c0c0c0"/>
<path d="M1275.300 213.500l9.500 9.500M1284.800 213.500l-9.500 9.500" stroke="#222" stroke-width="1.100"/>
<rect x="696" y="241" width="602" height="555" fill="#fff"/>
<text class="dg" x="703.300" y="254" textLength="40.900" lengthAdjust="spacingAndGlyphs">Common</text>
<text class="dg" x="756.300" y="254" textLength="31.300" lengthAdjust="spacingAndGlyphs">Inputs</text>
<rect x="757" y="259" width="31" height="2" fill="#0067c0"/>
<rect x="708.800" y="271.500" width="463.700" height="508.800" fill="#fff" stroke="#8f8f9f" stroke-width="1.200"/>
<g fill="#e9e9e9">
<rect x="710" y="316.300" width="461.300" height="20"/><rect x="710" y="356.300" width="461.300" height="20"/><rect x="710" y="396.300" width="461.300" height="20"/><rect x="710" y="436.300" width="461.300" height="20"/><rect x="710" y="476.300" width="461.300" height="20"/><rect x="710" y="516.300" width="461.300" height="20"/><rect x="710" y="556.300" width="461.300" height="20"/><rect x="710" y="596.300" width="461.300" height="20"/><rect x="710" y="636.300" width="461.300" height="20"/><rect x="710" y="676.300" width="461.300" height="20"/>
</g>
<path d="M710 316.300H1171.300M710 336.300H1171.300M710 356.300H1171.300M710 376.300H1171.300M710 396.300H1171.300M710 416.300H1171.300M710 436.300H1171.300M710 456.300H1171.300M710 476.300H1171.300M710 496.300H1171.300M710 516.300H1171.300M710 536.300H1171.300M710 556.300H1171.300M710 576.300H1171.300M710 596.300H1171.300M710 616.300H1171.300M710 636.300H1171.300M710 656.300H1171.300M710 676.300H1171.300M710 696.300H1171.300" stroke="#cfcfcf" stroke-width="1.300"/>
<path d="M939.500 273V696.300" stroke="#cfcfcf" stroke-width="1.200"/>
<text class="dg" x="715.300" y="289" textLength="38.200" lengthAdjust="spacingAndGlyphs">Variable</text>
<text class="dg" x="945.500" y="289" textLength="25.500" lengthAdjust="spacingAndGlyphs">Value</text>
<text class="dg" x="713" y="311" textLength="83" lengthAdjust="spacingAndGlyphs">Account Manager</text>
<text class="o1" x="714" y="329.500" textLength="11" lengthAdjust="spacingAndGlyphs">01</text>
<text class="dg" x="730.200" y="331" textLength="110.800" lengthAdjust="spacingAndGlyphs">Expert Advisor Number</text>
<text class="dg" x="943" y="331">1</text>
<use href="#bo" x="714" y="336.300"/>
<text class="dg" x="730.200" y="351" textLength="143" lengthAdjust="spacingAndGlyphs">Exponential Growth Approach</text>
<text class="dg" x="943" y="351" textLength="19.400" lengthAdjust="spacingAndGlyphs">true</text>
<use href="#bo" x="714" y="356.300"/>
<text class="dg" x="730.200" y="371" textLength="140.200" lengthAdjust="spacingAndGlyphs">High Impact Event Protection</text>
<text class="dg" x="943" y="371" textLength="19.400" lengthAdjust="spacingAndGlyphs">true</text>
<use href="#bo" x="714" y="376.300"/>
<text class="dg" x="730.200" y="391" textLength="158.300" lengthAdjust="spacingAndGlyphs">Trade Panel Account Information</text>
<text class="dg" x="943" y="391" textLength="19.400" lengthAdjust="spacingAndGlyphs">true</text>
<text class="dg" x="712" y="411" textLength="64" lengthAdjust="spacingAndGlyphs">Risk Manager</text>
<text class="hf" x="713.500" y="431">½</text>
<text class="dg" x="730.200" y="431" textLength="77.100" lengthAdjust="spacingAndGlyphs">Position Lot Size</text>
<text class="dg" x="942.700" y="431" textLength="22.100" lengthAdjust="spacingAndGlyphs">0.01</text>
<text class="o1" x="714" y="449.500" textLength="11" lengthAdjust="spacingAndGlyphs">01</text>
<text class="dg" x="730.200" y="451" textLength="80.800" lengthAdjust="spacingAndGlyphs">Stop Loss Offset</text>
<text class="dg" x="943.500" y="451" textLength="16.900" lengthAdjust="spacingAndGlyphs">100</text>
<text class="o1" x="714" y="469.500" textLength="11" lengthAdjust="spacingAndGlyphs">01</text>
<text class="dg" x="730.200" y="471" textLength="71.100" lengthAdjust="spacingAndGlyphs">Trail Activation</text>
<text class="dg" x="943.500" y="471" textLength="16.900" lengthAdjust="spacingAndGlyphs">200</text>
<text class="o1" x="714" y="489.500" textLength="11" lengthAdjust="spacingAndGlyphs">01</text>
<text class="dg" x="730.200" y="491" textLength="54.600" lengthAdjust="spacingAndGlyphs">Trail Offset</text>
<text class="dg" x="943.500" y="491" textLength="16.900" lengthAdjust="spacingAndGlyphs">100</text>
<text class="dg" x="712" y="511" textLength="106" lengthAdjust="spacingAndGlyphs">Performance Manager</text>
<path d="M716 524h7M714.500 526.500h10M716 529h7" stroke="#2c7fc1"/><path d="M716 521h7M716 531.500h7" stroke="#d8352a"/>
<text class="dg" x="730.200" y="531" textLength="102.800" lengthAdjust="spacingAndGlyphs">Resolution Timeframe</text>
<text class="dg" x="943.500" y="531" textLength="51" lengthAdjust="spacingAndGlyphs">15 Minutes</text>
<text class="o1" x="714" y="549.500" textLength="11" lengthAdjust="spacingAndGlyphs">01</text>
<text class="dg" x="730.200" y="551" textLength="86.400" lengthAdjust="spacingAndGlyphs">Resolution Length</text>
<text class="dg" x="943" y="551" textLength="11.400" lengthAdjust="spacingAndGlyphs">20</text>
<text class="o1" x="714" y="569.500" textLength="11" lengthAdjust="spacingAndGlyphs">01</text>
<text class="dg" x="730.200" y="571" textLength="112.100" lengthAdjust="spacingAndGlyphs">Resolution Scale Factor</text>
<text class="dg" x="943" y="571" textLength="11.400" lengthAdjust="spacingAndGlyphs">10</text>
<text class="hf" x="713.500" y="591">½</text>
<text class="dg" x="730.200" y="591" textLength="94.800" lengthAdjust="spacingAndGlyphs">Volatility Ratio Filter</text>
<text class="dg" x="942.700" y="591" textLength="15.700" lengthAdjust="spacingAndGlyphs">0.5</text>
<text class="hf" x="713.500" y="611">½</text>
<text class="dg" x="730.200" y="611" textLength="167.100" lengthAdjust="spacingAndGlyphs">Performance Validation Score Filter</text>
<text class="dg" x="942.700" y="611" textLength="15.700" lengthAdjust="spacingAndGlyphs">2.0</text>
<text class="o1" x="714" y="629.500" textLength="11" lengthAdjust="spacingAndGlyphs">01</text>
<text class="dg" x="730.200" y="631" textLength="108.800" lengthAdjust="spacingAndGlyphs">Spread Deviation Filter</text>
<text class="dg" x="943" y="631" textLength="11.400" lengthAdjust="spacingAndGlyphs">20</text>
<text class="dg" x="712" y="651" textLength="80.900" lengthAdjust="spacingAndGlyphs">Session Manager</text>
<text class="o1" x="714" y="669.500" textLength="11" lengthAdjust="spacingAndGlyphs">01</text>
<text class="dg" x="730.200" y="671" textLength="81.100" lengthAdjust="spacingAndGlyphs">Activation Period</text>
<text class="dg" x="943" y="671">0</text>
<text class="o1" x="714" y="689.500" textLength="11" lengthAdjust="spacingAndGlyphs">01</text>
<text class="dg" x="730.200" y="691" textLength="69.100" lengthAdjust="spacingAndGlyphs">Session Period</text>
<text class="dg" x="943" y="691" textLength="11.400" lengthAdjust="spacingAndGlyphs">20</text>
<rect x="1181.500" y="727.700" width="102" height="20" rx="3.500" fill="#fdfdfd" stroke="#cfcfcf"/>
<text class="dg" x="1220.300" y="741.700" textLength="23.300" lengthAdjust="spacingAndGlyphs">Load</text>
<rect x="1181.500" y="758.500" width="102" height="20" rx="3.500" fill="#fdfdfd" stroke="#cfcfcf"/>
<text class="dg" x="1219.500" y="772.700" textLength="23.800" lengthAdjust="spacingAndGlyphs">Save</text>
<rect x="1059.500" y="803.500" width="72" height="20" rx="3.500" fill="#fdfdfd" stroke="#0067c0" stroke-width="1.300"/>
<text class="dg" x="1087.300" y="817.700" textLength="14.500" lengthAdjust="spacingAndGlyphs">OK</text>
<rect x="1139.500" y="803.500" width="72" height="20" rx="3.500" fill="#fdfdfd" stroke="#cfcfcf"/>
<text class="dg" x="1158.500" y="817.700" textLength="32.100" lengthAdjust="spacingAndGlyphs">Cancel</text>
<rect x="1219.500" y="803.500" width="72" height="20" rx="3.500" fill="#fdfdfd" stroke="#cfcfcf"/>
<text class="dg" x="1240" y="817.700" textLength="29" lengthAdjust="spacingAndGlyphs">Reset</text>
<path d="M1300 825.500h1M1297.500 827.500h1M1300 827.500h1M1295 829.500h1M1297.500 829.500h1M1300 829.500h1" stroke="#999" stroke-width="1.300"/>
</svg>
</body></html>
